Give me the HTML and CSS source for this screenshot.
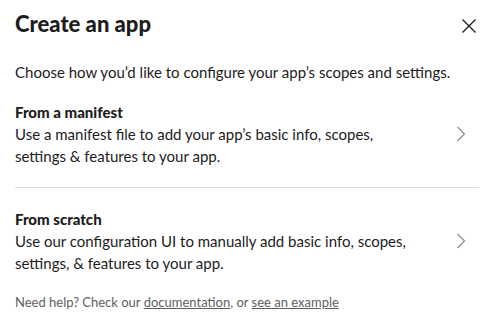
FILE: index.html
```html
<!DOCTYPE html>
<html>
<head>
<meta charset="utf-8">
<link rel="stylesheet" href="styles.css">
</head>
<body>
<div class="modal">
  <div class="header">
    <h1 class="title">Create an app</h1>
    <button class="close" aria-label="Close">
      <svg width="16" height="16" viewBox="0 0 16 16"><path d="M1.5 1.5L14.5 14.5M14.5 1.5L1.5 14.5" stroke="#1d1c1d" stroke-width="1.3" fill="none"/></svg>
    </button>
  </div>
  <p class="intro">Choose how you’d like to configure your app’s scopes and settings.</p>
  <div class="option">
    <div class="option-text">
      <div class="option-title">From a manifest</div>
      <div class="option-desc">Use a manifest file to add your app’s basic info, scopes, settings &amp; features to your app.</div>
    </div>
    <svg class="chev" width="10" height="16" viewBox="0 0 10 16"><path d="M1.5 1L8.5 8L1.5 15" stroke="#8a8a8a" stroke-width="1.2" fill="none"/></svg>
  </div>
  <div class="divider"></div>
  <div class="option option-last">
    <div class="option-text">
      <div class="option-title">From scratch</div>
      <div class="option-desc">Use our configuration UI to manually add basic info, scopes, settings, &amp; features to your app.</div>
    </div>
    <svg class="chev" width="10" height="16" viewBox="0 0 10 16"><path d="M1.5 1L8.5 8L1.5 15" stroke="#8a8a8a" stroke-width="1.2" fill="none"/></svg>
  </div>
  <p class="help">Need help? Check our <a href="#">documentation</a>, or <a href="#">see an example</a></p>
</div>
</body>
</html>
```
FILE: styles.css
```css
html, body {
  margin: 0;
  padding: 0;
  background: #fff;
}
body {
  font-family: Lato, "Noto Sans", sans-serif;
  color: #1d1c1d;
}
.modal {
  padding: 8px 21px 0 15px;
}
.header {
  display: flex;
  align-items: center;
  justify-content: space-between;
}
.title {
  margin: 0;
  font-size: 22px;
  font-weight: 900;
  line-height: 32px;
}
.close {
  border: 0;
  background: none;
  padding: 0;
  margin: 3px 2px 0 0;
  display: flex;
}
.intro {
  margin: 21px 0 0;
  font-size: 15px;
  line-height: 22px;
}
.option {
  display: flex;
  align-items: center;
  justify-content: space-between;
  padding: 18px 0 20px;
}
.option-last {
  padding: 20px 0 9px;
}
.option-text {
  max-width: 410px;
}
.option-title {
  font-size: 15px;
  font-weight: 900;
  line-height: 22px;
}
.option-desc {
  font-size: 15px;
  line-height: 22px;
}
.chev {
  margin-right: 13px;
}
.divider {
  height: 1px;
  background: #dddddd;
}
.help {
  margin: 10px 0 0;
  font-size: 13px;
  line-height: 18px;
  color: #616061;
}
.help a {
  color: #616061;
  text-decoration: underline;
}
```
